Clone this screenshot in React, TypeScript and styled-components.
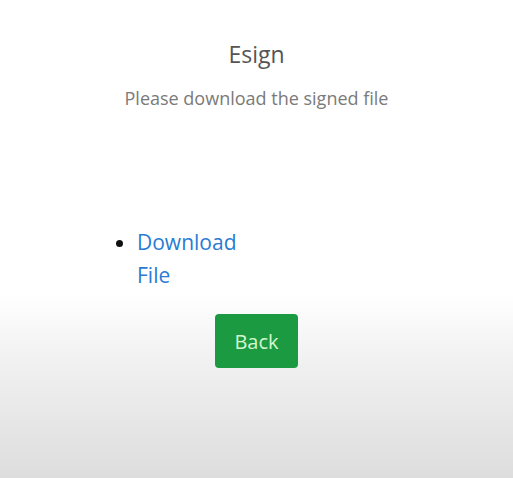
import React from 'react';
import styled, { createGlobalStyle } from 'styled-components';

const GlobalStyle = createGlobalStyle`
  html, body {
    margin: 0;
    padding: 0;
  }
  body {
    font-family: "Open Sans", "Noto Sans", sans-serif;
    background: #ffffff;
  }
`;

const Page = styled.div`
  width: 513px;
  height: 478px;
  display: flex;
  flex-direction: column;
  align-items: center;
  background: linear-gradient(
    to bottom,
    #ffffff 0px,
    #ffffff 295px,
    #f1f1f1 360px,
    #dddddd 478px
  );
  overflow: hidden;
`;

const Title = styled.h1`
  margin: 38px 0 0;
  font-size: 23px;
  font-weight: 400;
  color: #555555;
  line-height: 32px;
`;

const Subtitle = styled.p`
  margin: 16px 0 0;
  font-size: 18px;
  color: #7a7a7a;
  line-height: 24px;
`;

const Links = styled.ul`
  align-self: flex-start;
  margin: 116px 0 0 97px;
  padding-left: 40px;
  width: 112px;
  list-style: disc;
  color: #111111;
`;

const LinkItem = styled.li`
  font-size: 21px;
  line-height: 33px;
`;

const FileLink = styled.a`
  color: #2a7bd3;
  text-decoration: none;
`;

const BackButton = styled.button`
  margin-top: 22px;
  width: 83px;
  height: 54px;
  border: none;
  border-radius: 4px;
  background: #1b9a41;
  color: #d4f7d0;
  font-family: inherit;
  font-size: 20px;
  cursor: pointer;
`;

export default function App() {
  return (
    <>
      <GlobalStyle />
      <Page>
        <Title>Esign</Title>
        <Subtitle>Please download the signed file</Subtitle>
        <Links>
          <LinkItem>
            <FileLink href="#">Download File</FileLink>
          </LinkItem>
        </Links>
        <BackButton>Back</BackButton>
      </Page>
    </>
  );
}
